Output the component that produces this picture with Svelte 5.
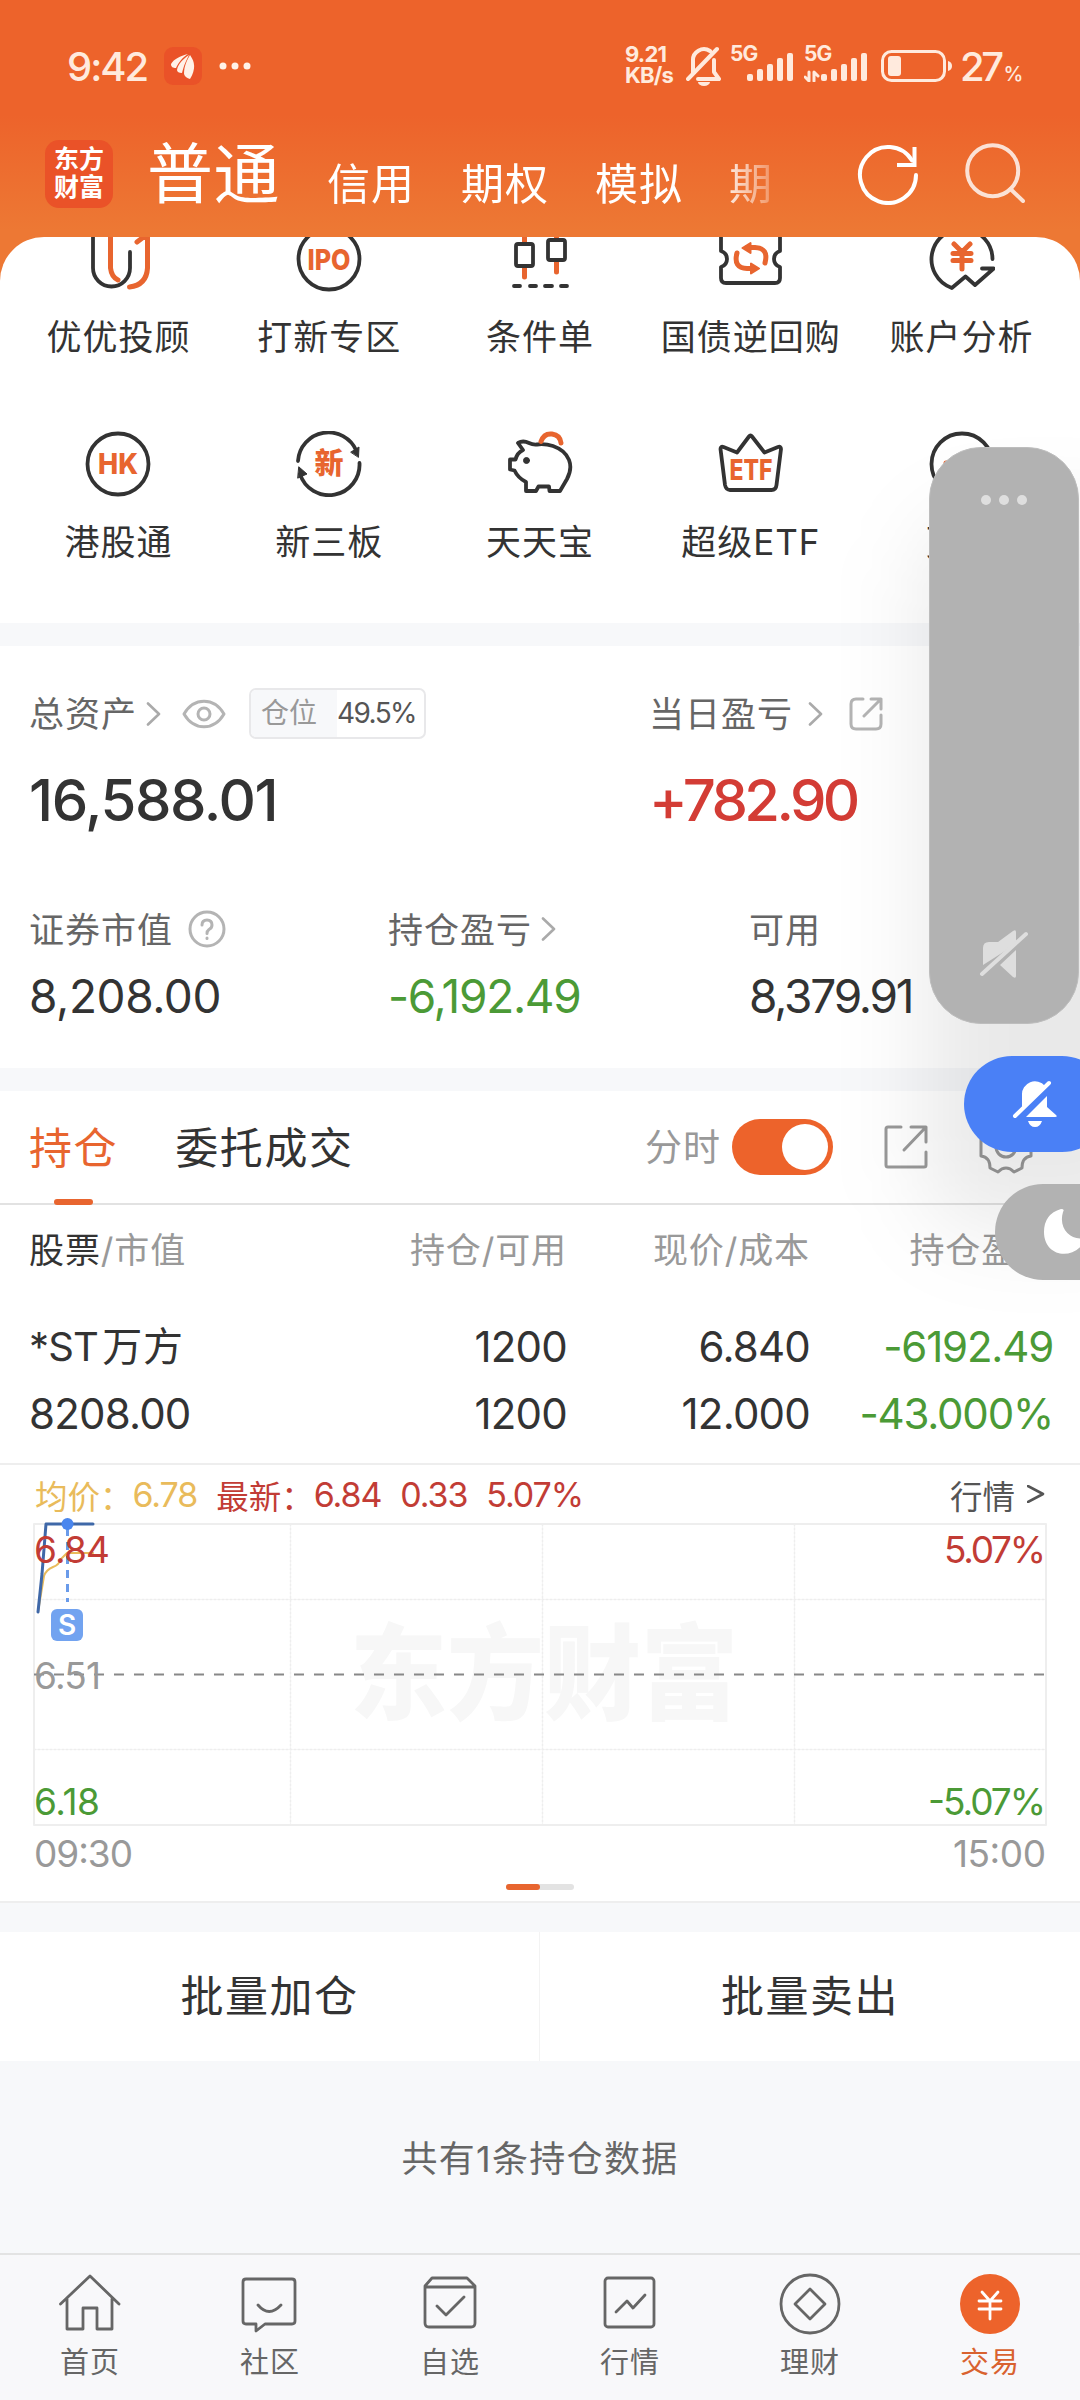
<script>
	const accounts = ["信用", "期权", "模拟", "期"];

	const shortcuts = [
		{ icon: "advisor", label: "优优投顾" },
		{ icon: "ipo", label: "打新专区" },
		{ icon: "condition", label: "条件单" },
		{ icon: "repo", label: "国债逆回购" },
		{ icon: "analysis", label: "账户分析" },
		{ icon: "hk", label: "港股通" },
		{ icon: "neeq", label: "新三板" },
		{ icon: "piggy", label: "天天宝" },
		{ icon: "etf", label: "超级ETF" },
		{ icon: "more", label: "更多" },
	];

	const tabs = [
		{ icon: "home", label: "首页" },
		{ icon: "community", label: "社区" },
		{ icon: "watchlist", label: "自选" },
		{ icon: "market", label: "行情" },
		{ icon: "wealth", label: "理财" },
		{ icon: "trade", label: "交易", active: true },
	];

	let intraday = true;
	const bars = [7, 12, 17, 23, 28];
</script>

{#snippet chevron()}
	<svg class="chevron" width="16" height="24" viewBox="0 0 16 24"><path d="M2 1.5 13 12 2 22.5" /></svg>
{/snippet}

{#snippet signal(data)}
	<div class="signal">
		<span class="net">5G</span>
		<svg width="64" height="30" viewBox="0 0 64 30">
			{#if data}
				<path class="thin" d="M5 20v9L1 25M10 29v-9l4 4" />
			{/if}
			{#each bars as h, i}
				<rect x={17 + i * 10} y={29 - h} width="6" height={h} rx="2" />
			{/each}
		</svg>
	</div>
{/snippet}

<div class="screen">
	<header>
		<div class="status">
			<span class="time">9:42</span>
			<span class="app-badge">
				<svg width="38" height="38" viewBox="0 0 38 38">
					<path d="M7 17c3-5 9-8 17-10-6 4-9 8-12 14-3 0-5-1-5-4z" />
					<path d="M13 23c1-6 6-11 12-15-3 6-5 10-7 18-3 0-5-1-5-3z" />
					<path d="M20 27c0-8 3-14 6-19 5 7 6 14 0 24-3-1-5-2-6-5z" />
				</svg>
			</span>
			<svg class="dots" width="34" height="8" viewBox="0 0 34 8">
				<circle cx="4" cy="4" r="3.500" /><circle cx="16" cy="4" r="3.500" /><circle cx="28" cy="4" r="3.500" />
			</svg>
			<div class="status-right">
				<div class="speed">
					<span>9.21</span>
					<span>KB/s</span>
				</div>
				<svg class="bell" width="36" height="40" viewBox="0 0 36 40">
					<path d="M7 27V15A11 11 0 0 1 24 5M28 14v12l5 7H12M2 33 31 3" />
					<path class="solid" d="M12 36h12a6 4 0 0 1-12 0z" />
				</svg>
				{@render signal(false)}
				{@render signal(true)}
				<svg class="battery" width="72" height="32" viewBox="0 0 72 32">
					<rect x="1.500" y="1.500" width="62" height="29" rx="9" />
					<rect class="solid" x="7" y="6" width="13" height="20" rx="3" />
					<path class="solid" d="M67 11q4 1 4 5t-4 5z" />
				</svg>
				<span class="percent">27<small>%</small></span>
			</div>
		</div>
		<div class="account-nav">
			<div class="logo">东方<br />财富</div>
			<strong>普通</strong>
			<nav>
				{#each accounts as account}
					<span>{account}</span>
				{/each}
			</nav>
			<svg class="nav-icon" width="62" height="62" viewBox="0 0 62 62">
				<path d="M60 32A28 28 0 1 1 56 17.500" />
				<path class="square" d="M58.500 4v18H41" />
			</svg>
			<svg class="nav-icon search" width="62" height="62" viewBox="0 0 62 62">
				<circle cx="28.700" cy="27.700" r="25.500" /><path d="m46.500 46 12.500 12" />
			</svg>
		</div>
	</header>

	<section class="shortcuts">
		{#each shortcuts as item}
			<div class="shortcut">
				<svg width="66" height="66" viewBox="0 0 66 66">
					{#if item.icon === "advisor"}
						<path d="M8 4v38a18.500 18.500 0 0 0 37 0V26" />
						<path class="accent" d="M25.500 11v31q1 9 7.500 12M52 16l10.500-8v34q-1 17-18 19" />
					{:else if item.icon === "ipo"}
						<circle cx="33" cy="33" r="30.500" />
						<text x="33" y="43.500" font-size="29" textLength="43" lengthAdjust="spacingAndGlyphs">IPO</text>
					{:else if item.icon === "condition"}
						<path class="accent" d="M17.500 6v45M49.500 12v34" />
						<rect class="blank" x="9" y="18" width="17" height="22" rx="2" />
						<rect class="blank" x="41" y="14" width="17" height="20" rx="2" />
						<path d="M7 60h6M23 60h6M38 60h7M54 60h6" />
					{:else if item.icon === "repo"}
						<path d="M3 4v21q6 2 6 8t-6 8v11q0 5 5 5h49q5 0 5-5V41q-6-2-6-8t6-8V4" />
						<path class="accent" d="M19 27q-4 15 10 15.500h8M47 37q4-15-10-15.500h-8" />
						<path class="accent fill" d="m24.500 22 8-5v10zM41 42.500l-8-5v10z" />
					{:else if item.icon === "analysis"}
						<path d="M63.500 33A30.500 30.500 0 1 0 22.800 62l13.700-11.500L46 59l18.800-16.500H53" />
						<path class="accent" d="m25 18 8 8 8-8M33 26v17M24 27.500h18M24 34.500h18" />
					{:else if item.icon === "hk"}
						<circle cx="33" cy="33" r="30.500" />
						<text x="33" y="43" font-size="28" textLength="40" lengthAdjust="spacingAndGlyphs">HK</text>
					{:else if item.icon === "neeq"}
						<path d="M2 30A30.500 30.500 0 0 1 60.500 20M63.500 32A30.500 30.500 0 0 1 4 43" />
						<path class="dark" d="m55 21 8-5-.5 10zM3 36l8 7-9 4z" />
						<text x="33" y="43" font-size="29">新</text>
					{:else if item.icon === "piggy"}
						<path d="M11 12q5-3 11 0 4 2 8 1.500Q38 12.500 46 15c17 6 21 20 14 33l-7 12H42.500l-.5-4.500H31.500L29 60H19v-9Q11 47 7.500 39.500L3 38.500V28.500h5.500Q10 22 16 19z" />
						<circle class="dark" cx="19.500" cy="29.500" r="3" />
						<path class="accent" d="M34 10.500Q37 2 45 3q8 1 9 9" />
					{:else if item.icon === "etf"}
						<path d="M7 54 2.500 18q0-3 3-2L19 21.500 31 5.500q1.500-2 3 0L46.500 21.500 60 16q3-1 3 2L58.500 54q-.5 5-5 5H12q-4 0-5-5z" />
						<text x="33" y="49" font-size="29" textLength="43" lengthAdjust="spacingAndGlyphs">ETF</text>
					{:else}
						<circle cx="33" cy="33" r="30.500" />
						<path class="accent" d="M17 32h32" />
					{/if}
				</svg>
				<span>{item.label}</span>
			</div>
		{/each}
	</section>

	<section class="assets">
		<div class="asset-labels">
			<div class="left">
				<span>总资产</span>
				{@render chevron()}
				<svg class="eye" width="44" height="30" viewBox="0 0 44 30">
					<path d="M2 15C12-2 32-2 42 15 32 32 12 32 2 15z" /><circle cx="22" cy="15" r="6" />
				</svg>
				<div class="position"><em>仓位</em><b>49.5%</b></div>
			</div>
			<div class="right">
				<span>当日盈亏</span>
				{@render chevron()}
				<svg class="share" width="34" height="34" viewBox="0 0 34 34">
					<path d="M14 2H7Q2 2 2 7v20q0 5 5 5h20q5 0 5-5v-9M15 19 32 2M22 2h10v10" />
				</svg>
			</div>
		</div>
		<div class="totals">
			<span class="total">16,588.01</span>
			<span class="total gain">+782.90</span>
		</div>
		<div class="details">
			<div>
				<p><span>证券市值</span>
					<svg class="help" width="38" height="38" viewBox="0 0 38 38">
						<circle cx="19" cy="19" r="17" />
						<path d="M14 15q0-5 5-5t5 5q0 3-3 4.500-2 1.500-2 4M19 28v.5" />
					</svg>
				</p>
				<b>8,208.00</b>
			</div>
			<div>
				<p><span>持仓盈亏</span>{@render chevron()}</p>
				<b class="loss">-6,192.49</b>
			</div>
			<div>
				<p><span>可用</span></p>
				<b class="tight">8,379.91</b>
			</div>
		</div>
	</section>

	<section class="holdings">
		<div class="tabs">
			<span class="tab active">持仓</span>
			<span class="tab">委托成交</span>
			<span class="toggle-label">分时</span>
			<button class="toggle" class:on={intraday} aria-label="分时" onclick={() => (intraday = !intraday)}><i></i></button>
			<svg class="tool" width="46" height="46" viewBox="0 0 46 46">
				<path d="M18 3H5q-2 0-2 2v36q0 2 2 2h36q2 0 2-2V28M21 26 43 3M28 3h15v15" />
			</svg>
			<svg class="tool gear" width="54" height="54" viewBox="0 0 54 54">
				<path d="M19 2q8 8 16 0l8 4q0 11 9 12v18q-9 1-9 12l-8 4q-8-8-16 0l-8-4q0-11-9-12V18q9-1 9-12z" />
				<circle cx="27" cy="27" r="10" />
			</svg>
		</div>
		<div class="row head">
			<span><em>股票</em>/市值</span>
			<span>持仓/可用</span>
			<span>现价/成本</span>
			<span>持仓盈亏</span>
		</div>
		<div class="row stock">
			<span class="name">*ST<i>万方</i></span>
			<span>1200</span>
			<span>6.840</span>
			<span class="loss">-6192.49</span>
			<span>8208.00</span>
			<span>1200</span>
			<span>12.000</span>
			<span class="loss">-43.000%</span>
		</div>
	</section>

	<section class="chart">
		<div class="legend">
			<span class="avg">均价：</span><span class="avg num">6.78</span>
			<span class="last">最新：</span><span class="last num">6.84</span>
			<span class="last num">0.33</span><span class="last num">5.07%</span>
			<span class="quote">行情</span>
			<svg width="18" height="18" viewBox="0 0 18 18"><path d="m1 1 15 8L1 17" /></svg>
		</div>
		<svg class="plot" width="1080" height="364" viewBox="0 0 1080 364">
			<text class="watermark" x="350" y="198" textLength="388" lengthAdjust="spacingAndGlyphs">东方财富</text>
			<path class="grid" d="M34 85.500H1046M34 235.500H1046M290.500 10V311M542.500 10V311M794.500 10V311" />
			<rect class="frame" x="34" y="10" width="1012" height="301" />
			<path class="base" d="M34 160.500H1046" />
			<path class="avg-line" d="M38 98 44 62Q46 56 53 53 59 51 61 45L67 39H93" />
			<path class="price-line" d="M38 98 42 60 46 10H93" />
			<path class="mark-line" d="M67.500 14V88" />
			<circle class="mark" cx="67.500" cy="10" r="6" />
			<rect class="mark" x="51" y="95" width="32" height="32" rx="6" />
			<text class="mark-text" x="67" y="121">S</text>
			<g class="axis">
				<text class="up" x="34" y="49" textLength="76">6.84</text>
				<text x="34" y="175" textLength="67">6.51</text>
				<text class="down" x="34" y="301" textLength="66">6.18</text>
				<text x="34" y="353" textLength="99">09:30</text>
				<text class="up" x="944" y="49" textLength="102">5.07%</text>
				<text class="down" x="928" y="301" textLength="118">-5.07%</text>
				<text x="953" y="353" textLength="93">15:00</text>
			</g>
		</svg>
		<div class="pager"><i></i></div>
	</section>

	<div class="actions">
		<span>批量加仓</span>
		<span>批量卖出</span>
	</div>

	<p class="summary">共有1条持仓数据</p>

	<footer>
		{#each tabs as tab}
			<div class="nav-tab" class:active={tab.active}>
				<svg width="64" height="64" viewBox="0 0 64 64">
					{#if tab.icon === "home"}
						<path d="M2.500 33 32 5l29 28M9 28v30h16V37h14v21h15V28" />
					{:else if tab.icon === "community"}
						<path d="M8 8h46q3 0 3 3v39q0 3-3 3H27l-9 7v-7H8q-3 0-3-3V11q0-3 3-3zM20 34q11 13 23 0" />
					{:else if tab.icon === "watchlist"}
						<path d="M7 15 14 7h35l8 8v37q0 4-4 4H11q-4 0-4-4zM7 16h50M19 35l9 9 18-18" />
					{:else if tab.icon === "market"}
						<rect x="7" y="7" width="49" height="49" rx="3" /><path d="m18 41 11-11 6 7 12-13" />
					{:else if tab.icon === "wealth"}
						<circle cx="32" cy="33" r="29" /><path d="M32 18 47 33 32 48 17 33z" />
					{:else}
						<circle class="solid" cx="32" cy="33" r="30" />
						<path class="yen" d="m24 21 8 9 8-9M32 30v18M21 30h22M21 38h22" />
					{/if}
				</svg>
				<span>{tab.label}</span>
			</div>
		{/each}
	</footer>

	<div class="volume-shade"></div>
	<div class="volume">
		<svg width="48" height="10" viewBox="0 0 48 10">
			<circle cx="6" cy="5" r="5" /><circle cx="24" cy="5" r="5" /><circle cx="42" cy="5" r="5" />
		</svg>
		<svg width="50" height="52" viewBox="0 0 50 52">
			<path d="M4 37V20q0-6 6-6h9L34 3q3-2 3 1v12zM21 37l16-15v26q0 3-3 1z" />
			<path class="slash" d="M3 46 47 6" />
		</svg>
	</div>
	<div class="pill mute">
		<svg width="48" height="50" viewBox="0 0 48 50">
			<path d="M10 31V16a13 13 0 0 1 23-9zM14 38 35 17v11l9 8q2 2-1 2zM16 42h14q-2 6-7 6t-7-6z" />
			<path class="slash" d="M3 37 37 4" />
		</svg>
	</div>
	<div class="pill moon">
		<svg width="48" height="48" viewBox="0 0 48 48">
			<path d="M18 1q4 0 2 3c-5 17 8 29 21 26q3 0 1 3C29 54 1 48 1 24Q1 6 18 1z" />
		</svg>
	</div>
</div>

<style>
	:global(body) {
		background: #f7f8fa;
	}

	.screen {
		position: relative;
		width: 1080px;
		height: 2400px;
		overflow: hidden;
		background: #f7f8fa;
		color: #333;
		font-family: Inter, "Noto Sans CJK SC", sans-serif;
		font-size: 35px;
	}

	svg {
		display: block;
		flex: none;
		fill: none;
		stroke-linecap: round;
		stroke-linejoin: round;
	}

	p {
		margin: 0;
	}

	b,
	i,
	em {
		font-weight: 400;
		font-style: normal;
	}

	header {
		height: 282px;
		background: linear-gradient(#ed632b 0, #ed632b 115px, #ed7834 230px);
		color: #fff;
	}

	.status {
		display: flex;
		align-items: center;
		height: 132px;
		padding: 0 60px 0 67px;
		box-sizing: border-box;
		color: #ffeadd;
	}

	.time {
		width: 97px;
		font-size: 40px;
		font-weight: 500;
		letter-spacing: -2px;
	}

	.app-badge {
		border-radius: 9px;
		background: #ea5228;
		margin-right: 17px;
	}

	.app-badge svg,
	.dots {
		fill: #fff2e8;
	}

	.status-right {
		display: flex;
		align-items: center;
		margin-left: auto;
	}

	.speed {
		display: flex;
		flex-direction: column;
		width: 61px;
		margin-top: -2px;
		font-size: 22px;
		line-height: 21px;
		font-weight: 700;
		letter-spacing: -0.8px;
	}

	.bell {
		margin-right: 8px;
		stroke: #ffeadd;
		stroke-width: 4;
	}

	.bell .solid {
		fill: #ffeadd;
		stroke: none;
	}

	.signal {
		display: grid;
		width: 74px;
		height: 34px;
		margin-top: -2px;
	}

	.signal + .signal {
		width: 77px;
	}

	.signal > * {
		grid-area: 1 / 1;
	}

	.signal svg {
		fill: #ffeadd;
		align-self: end;
	}

	.signal .net {
		margin-top: -3px;
		font-size: 21px;
		line-height: 18px;
		font-weight: 700;
		letter-spacing: -1px;
	}

	.thin {
		fill: none;
		stroke: #ffeadd;
		stroke-width: 3;
	}

	.battery {
		stroke: #ffeadd;
		stroke-width: 3;
	}

	.battery .solid {
		fill: #ffeadd;
		stroke: none;
	}

	.percent {
		width: 60px;
		margin-left: 7px;
		font-size: 40px;
		font-weight: 500;
		letter-spacing: -3.5px;
		white-space: nowrap;
	}

	.percent small {
		margin-left: 3px;
		font-size: 20px;
	}

	.account-nav {
		display: flex;
		align-items: center;
		height: 84px;
		padding: 0 54px 0 45px;
	}

	.logo {
		width: 68px;
		height: 68px;
		border-radius: 14px;
		background: #ea5228;
		font-size: 25px;
		line-height: 28px;
		font-weight: 700;
		text-align: center;
		padding-top: 5px;
		box-sizing: border-box;
	}

	.account-nav strong {
		margin-left: 34px;
		font-size: 66px;
		font-weight: 400;
		letter-spacing: 0.5px;
		line-height: 84px;
	}

	nav {
		display: flex;
		gap: 46px;
		width: 442px;
		margin: 20px auto 0 47px;
		font-size: 43px;
		letter-spacing: 1px;
		line-height: 60px;
		white-space: nowrap;
		mask: linear-gradient(to right, #000 390px, transparent 465px);
	}

	.nav-icon {
		stroke: #fff;
		stroke-width: 4;
	}

	.nav-icon .square {
		stroke-linecap: butt;
		stroke-linejoin: miter;
	}

	.search {
		margin-left: 46px;
		opacity: 0.8;
	}

	.shortcuts {
		position: relative;
		display: grid;
		grid-template-columns: repeat(5, 1fr);
		grid-auto-rows: 205px;
		height: 386px;
		margin-top: -45px;
		padding: 0 13px;
		box-sizing: border-box;
		overflow: hidden;
		border-radius: 44px 44px 0 0;
		background: #fff;
	}

	.shortcut {
		display: flex;
		flex-direction: column;
		align-items: center;
		margin-top: -11px;
		height: 205px;
		letter-spacing: 1px;
		line-height: 50px;
		white-space: nowrap;
	}

	.shortcut svg {
		stroke: #333;
		stroke-width: 3.8;
		margin-bottom: 20px;
	}

	.shortcut text {
		font-family: Inter, "Noto Sans CJK SC", sans-serif;
		font-weight: 800;
		letter-spacing: 0;
		text-anchor: middle;
		fill: #e8652f;
		stroke: none;
	}

	.shortcut .accent {
		stroke: #e8652f;
		stroke-width: 5;
	}

	.shortcut .fill {
		fill: #e8652f;
		stroke-width: 2;
	}

	.shortcut .blank {
		fill: #fff;
	}

	.shortcut .dark {
		fill: #333;
		stroke-width: 1;
	}

	.assets {
		height: 422px;
		margin-top: 23px;
		padding: 0 29px;
		box-sizing: border-box;
		overflow: hidden;
		background: #fff;
	}

	.asset-labels,
	.totals {
		display: grid;
		grid-template-columns: 620px 1fr;
	}

	.asset-labels {
		margin-top: 40px;
		height: 52px;
		color: #666;
		letter-spacing: 1px;
	}

	.asset-labels span,
	.details p span {
		padding-bottom: 4px;
	}

	.left,
	.right {
		display: flex;
		align-items: center;
	}

	.chevron {
		display: inline-block;
		margin-left: 9px;
		stroke: #aaa;
		stroke-width: 2.6;
	}

	.right .chevron {
		margin-left: 15px;
	}

	.eye,
	.share,
	.help {
		stroke: #b4b4b4;
		stroke-width: 3;
	}

	.eye {
		margin: 0 23px 0 20px;
	}

	.share {
		margin-left: 25px;
	}

	.position {
		display: flex;
		border: 2px solid #e8e8ea;
		border-radius: 7px;
		overflow: hidden;
		font-size: 28px;
		line-height: 47px;
		letter-spacing: -1.6px;
	}

	.position em {
		width: 86px;
		padding-left: 10px;
		box-sizing: border-box;
		background: #f7f8fa;
		color: #999;
		letter-spacing: 0;
	}

	.position b {
		width: 87px;
		color: #555;
	}

	.totals {
		margin-top: 22px;
		line-height: 80px;
	}

	.total {
		font-size: 58px;
		font-weight: 450;
		letter-spacing: -1.4px;
	}

	.gain {
		color: #d33c35;
		font-weight: 500;
		letter-spacing: -3.6px;
	}

	.details {
		display: grid;
		grid-template-columns: 359px 361px 1fr;
		margin-top: 63px;
	}

	.details p {
		display: flex;
		align-items: center;
		height: 52px;
		color: #666;
		letter-spacing: 1px;
	}

	.help {
		margin-left: 15px;
	}

	.details b {
		display: block;
		margin-top: 11px;
		font-size: 46px;
		line-height: 60px;
		letter-spacing: -0.4px;
	}

	.details .loss {
		letter-spacing: -1.3px;
	}

	.details .tight {
		letter-spacing: -2.2px;
	}

	.loss {
		color: #4b9a36;
	}

	.holdings {
		height: 374px;
		margin-top: 23px;
		background: #fff;
		border-bottom: 2px solid #eee;
		box-sizing: border-box;
	}

	.tabs {
		display: flex;
		align-items: center;
		height: 114px;
		padding-left: 29px;
		border-bottom: 2px solid #e2e2e2;
		box-sizing: border-box;
	}

	.tab {
		position: relative;
		margin-right: 57px;
		padding-bottom: 5px;
		font-size: 43px;
		letter-spacing: 1.6px;
	}

	.tab.active {
		color: #e8652f;
	}

	.tab.active::after {
		content: "";
		position: absolute;
		left: 25px;
		bottom: -24px;
		width: 39px;
		height: 6px;
		border-radius: 3px;
		background: #e8652f;
	}

	.toggle-label {
		margin-left: auto;
		padding-bottom: 4px;
		color: #999;
		font-size: 37px;
		letter-spacing: 1px;
	}

	.toggle {
		display: flex;
		width: 101px;
		height: 56px;
		margin: 0 50px 0 11px;
		padding: 5px;
		border: 0;
		border-radius: 28px;
		background: #ccc;
	}

	.toggle.on {
		justify-content: flex-end;
		background: #ed632b;
	}

	.toggle i {
		width: 46px;
		height: 46px;
		border-radius: 50%;
		background: #fff;
	}

	.tool {
		stroke: #999;
		stroke-width: 3;
	}

	.gear {
		margin: 0 47px 0 50px;
	}

	.row {
		display: grid;
		grid-template-columns: 260px 278px 243px 1fr;
		padding: 0 27px 0 29px;
		text-align: right;
	}

	.row span:nth-child(4n + 1) {
		text-align: left;
	}

	.head {
		padding-top: 20px;
		line-height: 50px;
		letter-spacing: 0.9px;
		color: #999;
	}

	.head em {
		color: #333;
	}

	.stock {
		padding-top: 38px;
		font-size: 42px;
		line-height: 67px;
		letter-spacing: -0.8px;
	}

	.stock .loss {
		letter-spacing: -1.2px;
	}

	.name i {
		margin-left: 4px;
		font-size: 40px;
		letter-spacing: 1px;
	}

	.stock .name {
		font-size: 40px;
	}

	.chart {
		height: 438px;
		background: #fff;
		border-bottom: 2px solid #eee;
		box-sizing: border-box;
		overflow: hidden;
	}

	.legend {
		display: flex;
		align-items: center;
		height: 50px;
		padding: 4px 35px 0;
		margin-bottom: -5px;
		font-size: 32.5px;
	}

	.avg {
		color: #e9bb5b;
	}

	.last {
		color: #c23c35;
	}

	.num {
		margin-right: 19px;
		font-size: 34px;
		letter-spacing: -1.1px;
	}

	.quote {
		margin-left: auto;
		margin-right: 12px;
		color: #555;
	}

	.legend svg {
		stroke: #555;
		stroke-width: 2.6;
	}

	.watermark {
		font-size: 104px;
		font-weight: 900;
		fill: #f7f7f7;
	}

	.grid {
		stroke: #eee;
		stroke-width: 1.5;
		stroke-dasharray: 2 2;
	}

	.frame {
		stroke: #eee;
		stroke-width: 2;
	}

	.base {
		stroke: #888;
		stroke-width: 2;
		stroke-dasharray: 10 10;
		stroke-linecap: butt;
	}

	.avg-line {
		stroke: #e9bb5b;
		stroke-width: 2;
	}

	.price-line {
		stroke: #3f68a8;
		stroke-width: 3;
	}

	.mark-line {
		stroke: #6a9bea;
		stroke-width: 3;
		stroke-dasharray: 8 6;
		stroke-linecap: butt;
	}

	circle.mark {
		fill: #4a86ee;
	}

	rect.mark {
		fill: #72a3f0;
	}

	.mark-text {
		fill: #fff;
		font-size: 28px;
		font-weight: 600;
		text-anchor: middle;
	}

	.axis {
		fill: #999;
		font-size: 37px;
	}

	.axis .up {
		fill: #c23c35;
	}

	.axis .down {
		fill: #4b9a36;
	}

	.pager {
		width: 68px;
		height: 6px;
		margin: 6px auto 0;
		border-radius: 3px;
		background: #e3e3e3;
	}

	.pager i {
		display: block;
		width: 34px;
		height: 6px;
		border-radius: 3px;
		background: #e8652f;
	}

	.actions {
		display: grid;
		grid-template-columns: 539px 1fr;
		margin-top: 29px;
		height: 129px;
		background: #fff;
		font-size: 43px;
		line-height: 129px;
		letter-spacing: 1.5px;
		text-align: center;
	}

	.actions span + span {
		border-left: 1px solid #f3f3f3;
	}

	.summary {
		height: 192px;
		line-height: 196px;
		text-align: center;
		color: #666;
		font-size: 36px;
		letter-spacing: 1.3px;
	}

	footer {
		display: grid;
		grid-template-columns: repeat(6, 1fr);
		height: 147px;
		border-top: 2px solid #e3e3e3;
		box-sizing: border-box;
		background: #f8f8fa;
	}

	.nav-tab {
		display: flex;
		flex-direction: column;
		align-items: center;
		padding-top: 16px;
		color: #666;
		font-size: 29px;
		line-height: 40px;
		letter-spacing: 1px;
	}

	.nav-tab span {
		margin-top: 8px;
	}

	.nav-tab svg {
		margin-left: -1px;
		stroke: #666;
		stroke-width: 2.8;
	}

	.nav-tab.active {
		color: #d9622f;
	}

	.nav-tab .solid {
		fill: #ed632b;
		stroke: none;
	}

	.nav-tab .yen {
		stroke: #fff;
	}

	.volume-shade {
		position: absolute;
		left: 925px;
		top: 520px;
		width: 240px;
		height: 710px;
		border-radius: 60px;
		background: rgba(0, 0, 0, 0.085);
		filter: blur(45px);
	}

	.volume {
		position: absolute;
		left: 929px;
		top: 447px;
		display: flex;
		flex-direction: column;
		align-items: center;
		justify-content: space-between;
		width: 150px;
		height: 577px;
		padding: 47px 0 43px;
		box-sizing: border-box;
		border: 1px solid #bdbdbd;
		border-radius: 52px;
		background: #b2b2b2;
	}

	.volume svg {
		fill: #dedede;
	}

	.volume .slash {
		stroke: #dedede;
		stroke-width: 4;
	}

	.pill {
		position: absolute;
		display: flex;
		align-items: center;
		width: 146px;
		height: 96px;
		padding-left: 48px;
		box-sizing: border-box;
		border-radius: 48px;
	}

	.pill svg {
		fill: #fff;
	}

	.pill .slash {
		stroke: #fff;
		stroke-width: 4;
	}

	.mute {
		left: 964px;
		top: 1056px;
		background: #4a80f6;
	}

	.moon {
		left: 995px;
		top: 1184px;
		background: #b2b2b2;
	}
</style>
